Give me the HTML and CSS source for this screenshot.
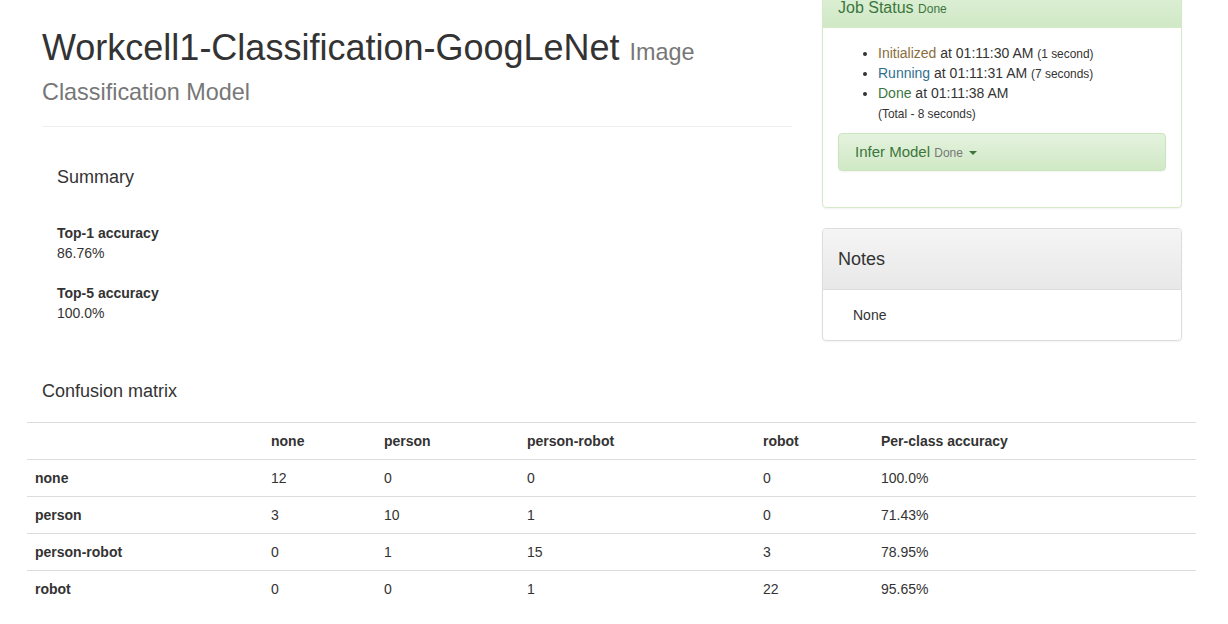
FILE: index.html
```html
<!DOCTYPE html>
<html>
<head>
<meta charset="utf-8">
<link rel="stylesheet" href="styles.css">
</head>
<body>
<div class="page">
  <div class="row">
    <div class="main">
      <div class="page-header">
        <h1>Workcell1-Classification-GoogLeNet <small>Image Classification Model</small></h1>
      </div>
      <div class="summary">
        <h4 class="summary-title">Summary</h4>
        <dl>
          <dt>Top-1 accuracy</dt>
          <dd>86.76%</dd>
          <dt>Top-5 accuracy</dt>
          <dd>100.0%</dd>
        </dl>
      </div>
    </div>
    <div class="side">
      <div class="panel panel-success">
        <div class="panel-heading">
          <h4 class="panel-title">Job Status <small>Done</small></h4>
        </div>
        <div class="panel-body">
          <ul class="status-list">
            <li><span class="text-warning">Initialized</span> at 01:11:30 AM <small>(1 second)</small></li>
            <li><span class="text-info">Running</span> at 01:11:31 AM <small>(7 seconds)</small></li>
            <li><span class="text-success">Done</span> at 01:11:38 AM<br><small>(Total - 8 seconds)</small></li>
          </ul>
          <div class="task-btn">Infer Model <small>Done</small> <span class="caret"></span></div>
        </div>
      </div>
      <div class="panel panel-default">
        <div class="panel-heading">
          <h4 class="notes-title">Notes</h4>
        </div>
        <div class="panel-body notes-body">None</div>
      </div>
    </div>
  </div>
  <h4 class="matrix-title">Confusion matrix</h4>
  <table class="matrix">
    <thead>
      <tr><th class="c1"></th><th class="c2">none</th><th class="c3">person</th><th class="c4">person-robot</th><th class="c5">robot</th><th>Per-class accuracy</th></tr>
    </thead>
    <tbody>
      <tr><th>none</th><td>12</td><td>0</td><td>0</td><td>0</td><td>100.0%</td></tr>
      <tr><th>person</th><td>3</td><td>10</td><td>1</td><td>0</td><td>71.43%</td></tr>
      <tr><th>person-robot</th><td>0</td><td>1</td><td>15</td><td>3</td><td>78.95%</td></tr>
      <tr><th>robot</th><td>0</td><td>0</td><td>1</td><td>22</td><td>95.65%</td></tr>
    </tbody>
  </table>
</div>
</body>
</html>
```

FILE: styles.css
```css
* { box-sizing: border-box; }
html, body { margin: 0; padding: 0; background: #fff; }
body {
  font-family: "Liberation Sans", Arial, Helvetica, sans-serif;
  font-size: 14px;
  line-height: 20px;
  color: #333;
}
.page {
  width: 1170px;
  margin-left: 27px;
}
.row {
  display: flex;
}
.main {
  width: 780px;
  padding: 0 15px;
}
.side {
  width: 390px;
  padding: 0 15px;
  margin-top: -12px;
}
.page-header {
  margin: 0 0 20px;
  padding: 28px 0 19px;
  border-bottom: 1px solid #eee;
}
h1 {
  margin: 0;
  font-size: 36px;
  font-weight: 500;
  line-height: 39.6px;
}
h1 small {
  font-size: 23.4px;
  line-height: 1;
  color: #777;
  font-weight: 400;
}
.summary {
  padding: 15px;
}
.summary-title {
  margin: 5px 0 36px;
  font-size: 18px;
  font-weight: 500;
  line-height: 20px;
}
dl { margin: 0; }
dt { font-weight: 700; }
dd { margin: 0 0 20px; }
.panel {
  border: 1px solid transparent;
  border-radius: 4px;
  box-shadow: 0 1px 2px rgba(0,0,0,.05);
  margin-bottom: 20px;
}
.panel-success { border-color: #d6e9c6; }
.panel-default { border-color: #ddd; }
.panel-heading {
  padding: 10px 15px;
  border-bottom: 1px solid transparent;
  border-radius: 3px 3px 0 0;
}
.panel-success .panel-heading {
  color: #3c763d;
  background: linear-gradient(to bottom, #dff0d8 0, #d0e9c6 100%);
  border-color: #d6e9c6;
}
.panel-default .panel-heading {
  color: #333;
  background: linear-gradient(to bottom, #f5f5f5 0, #e8e8e8 100%);
  border-color: #ddd;
}
.panel-title {
  margin: 0;
  font-size: 16px;
  font-weight: 500;
  line-height: 18px;
}
.panel-title small {
  font-size: 12px;
  line-height: 1;
  color: #3c763d;
  font-weight: 400;
}
.notes-title {
  margin: 10px 0;
  font-size: 18px;
  font-weight: 500;
  line-height: 20px;
}
.panel-body {
  padding: 15px;
}
.status-list {
  margin: 0 0 10px;
  padding-left: 40px;
}
.status-list small { font-size: 85%; line-height: 1; }
.text-warning { color: #8a6d3b; }
.text-info { color: #31708f; }
.text-success { color: #3c763d; }
.task-btn {
  margin-bottom: 21px;
  padding: 8px 16px;
  border: 1px solid #c8e5bc;
  border-radius: 4px;
  background: linear-gradient(to bottom, #e4f2de 0, #d0e9c6 100%);
  box-shadow: 0 1px 2px rgba(0,0,0,.05);
  color: #3c763d;
  font-size: 15px;
  line-height: 20px;
}
.task-btn small {
  font-size: 12px;
  line-height: 1;
  color: #777;
}
.caret {
  display: inline-block;
  width: 0;
  height: 0;
  margin-left: 2px;
  vertical-align: middle;
  border-top: 4px solid #3c763d;
  border-left: 4px solid transparent;
  border-right: 4px solid transparent;
}
.notes-body {
  padding: 15px 30px;
}
.matrix-title {
  margin: 20px 15px 21px;
  font-size: 18px;
  font-weight: 500;
  line-height: 20px;
}
.matrix {
  width: 1169px;
  border-collapse: collapse;
  border-spacing: 0;
}
.matrix th, .matrix td {
  padding: 8px;
  line-height: 20px;
  text-align: left;
  vertical-align: top;
  border-top: 1px solid #ddd;
}
.matrix th { font-weight: 700; }
.c1 { width: 236px; }
.c2 { width: 113px; }
.c3 { width: 143px; }
.c4 { width: 236px; }
.c5 { width: 118px; }
```
